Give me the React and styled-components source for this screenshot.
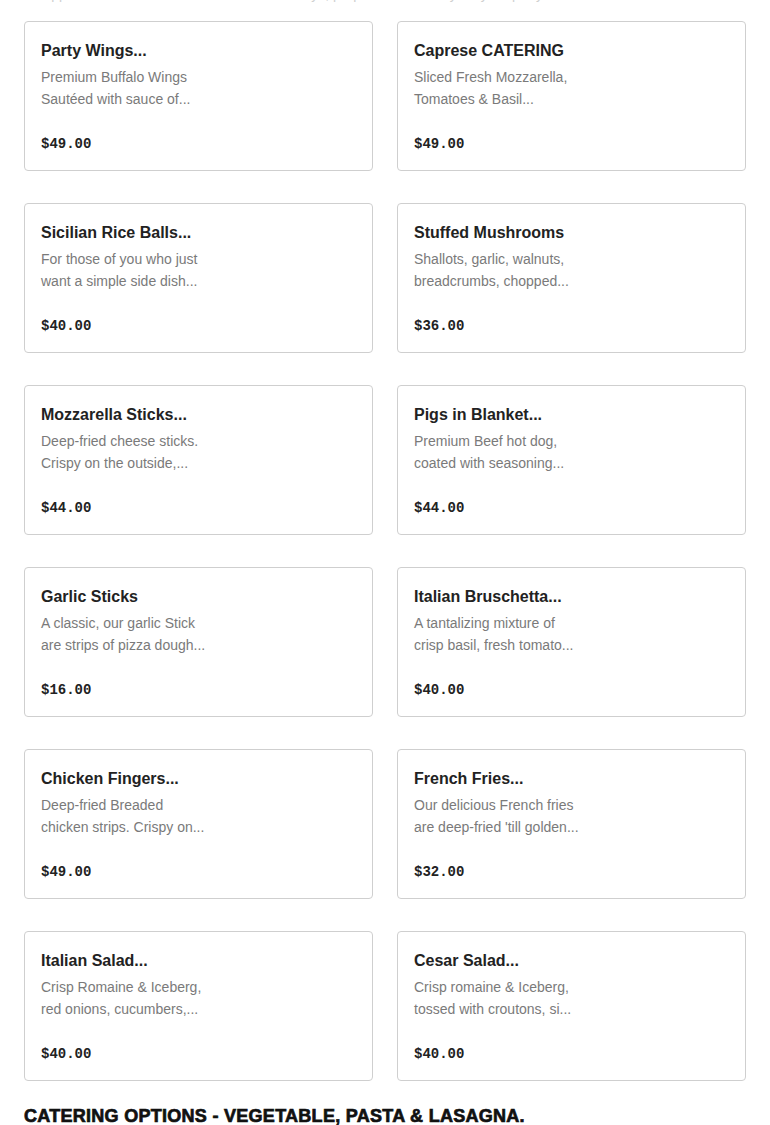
import React from "react";
import styled, { createGlobalStyle } from "styled-components";

const Global = createGlobalStyle`
  html, body { margin: 0; padding: 0; background: #fff; }
  body { font-family: "Liberation Sans", Arial, sans-serif; color: #222; overflow: hidden; }
`;

const Page = styled.main`
  padding: 0 24px;
  overflow: hidden;
`;

const Intro = styled.p`
  margin: -15px 0 0;
  font-size: 14px;
  line-height: 18px;
  color: #d0d0d0;
  white-space: nowrap;
`;

const Grid = styled.div`
  display: grid;
  grid-template-columns: repeat(2, 1fr);
  column-gap: 24px;
  row-gap: 32px;
  margin-top: 18px;
`;

const Card = styled.article`
  display: flex;
  flex-direction: column;
  height: 150px;
  box-sizing: border-box;
  border: 1px solid #cfcfcf;
  border-radius: 4px;
  padding: 19px 16px 16px;
  background: #fff;
`;

const Title = styled.h3`
  margin: 0;
  font-size: 16px;
  line-height: 20px;
  font-weight: 700;
  color: #222;
`;

const Desc = styled.p`
  margin: 5px 0 0;
  font-size: 14px;
  line-height: 22px;
  color: #7a7a7a;
`;

const Line = styled.span`
  display: block;
  white-space: nowrap;
`;

const Price = styled.div`
  margin-top: auto;
  font-family: "Liberation Mono", "Courier New", monospace;
  font-weight: 700;
  font-size: 14px;
  line-height: 20px;
  color: #222;
`;

const Heading = styled.h2`
  margin: 23px 0 0;
  font-size: 18px;
  line-height: 24px;
  font-weight: 900;
  color: #111;
  letter-spacing: 0.28px;
  -webkit-text-stroke: 0.7px #111;
`;

const items = [
  ["Party Wings...", ["Premium Buffalo Wings", "Sautéed with sauce of..."], "$49.00"],
  ["Caprese CATERING", ["Sliced Fresh Mozzarella,", "Tomatoes & Basil..."], "$49.00"],
  ["Sicilian Rice Balls...", ["For those of you who just", "want a simple side dish..."], "$40.00"],
  ["Stuffed Mushrooms", ["Shallots, garlic, walnuts,", "breadcrumbs, chopped..."], "$36.00"],
  ["Mozzarella Sticks...", ["Deep-fried cheese sticks.", "Crispy on the outside,..."], "$44.00"],
  ["Pigs in Blanket...", ["Premium Beef hot dog,", "coated with seasoning..."], "$44.00"],
  ["Garlic Sticks", ["A classic, our garlic Stick", "are strips of pizza dough..."], "$16.00"],
  ["Italian Bruschetta...", ["A tantalizing mixture of", "crisp basil, fresh tomato..."], "$40.00"],
  ["Chicken Fingers...", ["Deep-fried Breaded", "chicken strips. Crispy on..."], "$49.00"],
  ["French Fries...", ["Our delicious French fries", "are deep-fried 'till golden..."], "$32.00"],
  ["Italian Salad...", ["Crisp Romaine & Iceberg,", "red onions, cucumbers,..."], "$40.00"],
  ["Cesar Salad...", ["Crisp romaine & Iceberg,", "tossed with croutons, si..."], "$40.00"],
];

export default function App() {
  return (
    <>
      <Global />
      <Page>
        <Intro>All appetizers and salads are served in half trays, prepared fresh daily for your party.</Intro>
        <Grid>
          {items.map(([title, lines, price]) => (
            <Card key={title}>
              <Title>{title}</Title>
              <Desc>
                {lines.map((l) => (
                  <Line key={l}>{l}</Line>
                ))}
              </Desc>
              <Price>{price}</Price>
            </Card>
          ))}
        </Grid>
        <Heading>CATERING OPTIONS - VEGETABLE, PASTA &amp; LASAGNA.</Heading>
      </Page>
    </>
  );
}
